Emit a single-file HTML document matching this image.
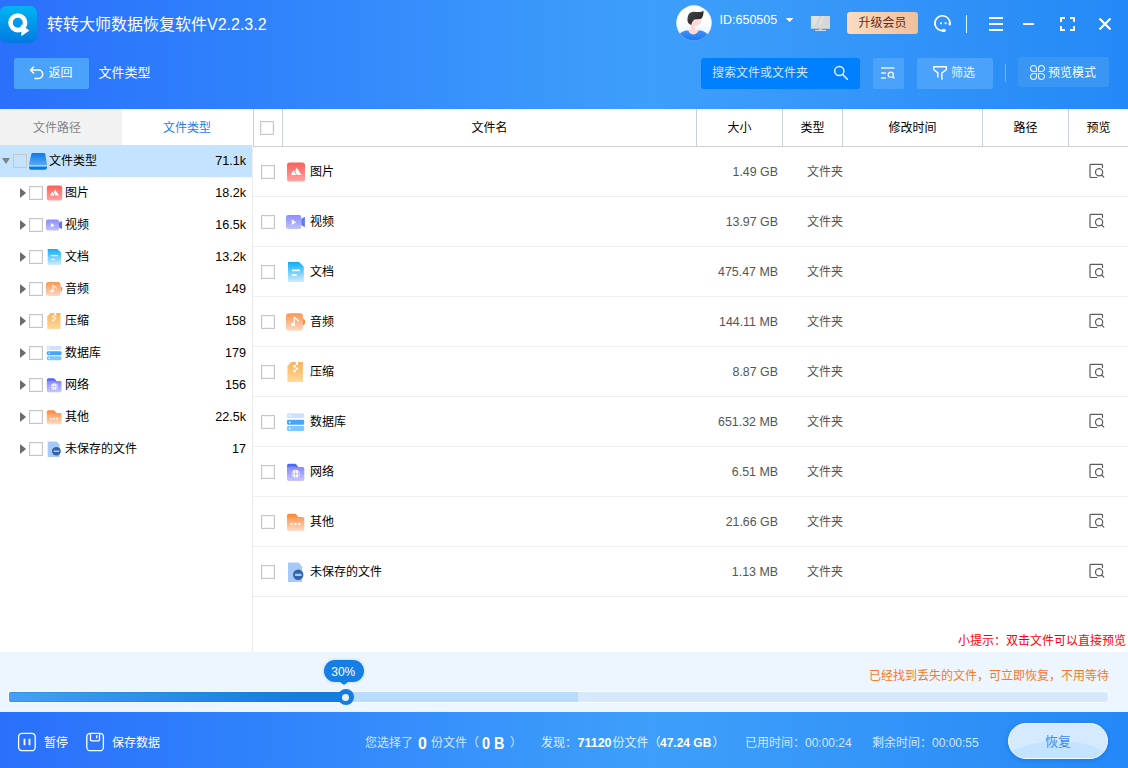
<!DOCTYPE html>
<html lang="zh-CN">
<head>
<meta charset="utf-8">
<title>转转大师数据恢复软件</title>
<style>
*{box-sizing:border-box;margin:0;padding:0}
html,body{width:1128px;height:768px;overflow:hidden;background:#fff}
body{font-family:"Liberation Sans","Noto Sans CJK SC",sans-serif;font-size:12px;color:#000;position:relative}
.abs{position:absolute}
#hdr{position:absolute;left:0;top:0;width:1128px;height:109px;background:linear-gradient(90deg,#2a70fb 0%,#3083fb 24%,#3893fb 42%,#3e9ffa 58%,#3294f8 80%,#2489f7 100%)}
.t{position:absolute;white-space:nowrap;line-height:1}
#title{left:47px;top:17px;font-size:16px;color:#fff}
.hbtn{position:absolute;background:#4aa2fb;border-radius:2px;color:#fff}
/* tabs */
#tab1{position:absolute;left:0;top:109px;width:122px;padding-right:8px;height:36px;background:#f2f2f2;color:#858585;text-align:center;line-height:38px}
#tab2{position:absolute;left:122px;top:109px;width:130px;height:36px;background:#fff;color:#1f80ea;text-align:center;line-height:38px}
#lpane{position:absolute;left:0;top:145px;width:252px;height:507px;background:#fff}
#vline{position:absolute;left:252px;top:147px;width:1px;height:505px;background:#ebebeb}
.trow{position:absolute;left:0;width:252px;height:32px}
.trow.sel{background:#c3e3ff}
.trow .nm{position:absolute;top:10px;line-height:12px;font-size:12px;white-space:nowrap}
.trow .ct{position:absolute;right:6px;top:10px;line-height:12px;font-size:12.600px}
.cb{position:absolute;width:14px;height:14px;border:1px solid #c6c6c6;background:#fff;box-shadow:inset 0 0 0 1px #f4f4f4}
.arr{position:absolute;width:0;height:0;border-style:solid}
.arr.r{border-width:5px 0 5px 6px;border-color:transparent transparent transparent #6c6c6c}
.arr.d{border-width:6px 4.600px 0 4.600px;border-color:#808080 transparent transparent transparent}
.ico{position:absolute;width:18px;height:18px}
/* table */
#thead{position:absolute;left:253px;top:109px;width:875px;height:38px;border-bottom:1px solid #cfcfcf;background:#fff}
#thead:before{content:"";position:absolute;left:0;top:0;width:1px;height:37px;background:#cfcfcf}
.th{position:absolute;top:0;height:37px;line-height:39px;text-align:center;font-size:12px;color:#000}
.vsep{position:absolute;top:0;width:1px;height:37px;background:#c9d0da}
.row{position:absolute;left:253px;width:875px;height:50px;border-bottom:1px solid #efefef}
.row .nm{position:absolute;left:57px;top:19px;line-height:12px;white-space:nowrap}
.row .sz{position:absolute;right:350px;top:19px;line-height:12px;color:#555;white-space:nowrap;font-size:12.400px}
.row .ty{position:absolute;left:554px;top:19px;line-height:12px;color:#555}
/* bottom */
#prog{position:absolute;left:0;top:652px;width:1128px;height:60px;background:#edf5fe}
#foot{position:absolute;left:0;top:712px;width:1128px;height:56px;background:linear-gradient(90deg,#2a70fb 0%,#3083fb 24%,#3893fb 42%,#3e9ffa 58%,#3294f8 80%,#2489f7 100%);color:#fff}
</style>
</head>
<body>

<svg width="0" height="0" style="position:absolute">
<defs>
<linearGradient id="gImg" x1="0" y1="0" x2="0" y2="1"><stop offset="0" stop-color="#fc5d57"/><stop offset="1" stop-color="#ffa5a2"/></linearGradient>
<linearGradient id="gVid" x1="0" y1="0" x2="0" y2="1"><stop offset="0" stop-color="#8b8ffb"/><stop offset="1" stop-color="#c0c0fd"/></linearGradient>
<linearGradient id="gDoc" x1="0" y1="0" x2="0" y2="1"><stop offset="0" stop-color="#0aaef8"/><stop offset="1" stop-color="#d2ecfd"/></linearGradient>
<linearGradient id="gAud" x1="0" y1="0" x2="0" y2="1"><stop offset="0" stop-color="#fd9550"/><stop offset="1" stop-color="#fbdac4"/></linearGradient>
<linearGradient id="gZip" x1="0" y1="0" x2="0" y2="1"><stop offset="0" stop-color="#fdb259"/><stop offset="1" stop-color="#fed99e"/></linearGradient>
<linearGradient id="gNet" x1="0" y1="0" x2="0" y2="1"><stop offset="0" stop-color="#8486fb"/><stop offset="1" stop-color="#c8c6fd"/></linearGradient>
<linearGradient id="gOth" x1="0" y1="0" x2="0" y2="1"><stop offset="0" stop-color="#fd9650"/><stop offset="1" stop-color="#fcdcc8"/></linearGradient>
<linearGradient id="gDsk" x1="0" y1="0" x2="0" y2="1"><stop offset="0" stop-color="#0a7be6"/><stop offset="1" stop-color="#5ca9f6"/></linearGradient>
<symbol id="iImg" viewBox="0 0 20 20" preserveAspectRatio="none"><rect x="1" y="0.500" width="18" height="19" rx="2.600" fill="url(#gImg)"/><path d="M4.800 13L7.500 8L10.200 13z" fill="#fff"/><path d="M10.800 5.800L15.300 13H10.700L10.300 10.900 9 9.200z" fill="#fff" stroke="#fd817d" stroke-width=".7" paint-order="stroke"/></symbol>
<symbol id="iVid" viewBox="0 0 20 20" preserveAspectRatio="none"><rect x="0" y="3" width="15.300" height="14" rx="2.200" fill="url(#gVid)"/><path d="M15.300 7L18 5.200a.6.600 0 0 1 .9.500V14.300a.6.600 0 0 1-.9.500L15.300 13z" fill="#6474f9"/><path d="M5.800 7.400V13.100L10.100 10.250z" fill="#fff"/></symbol>
<symbol id="iDoc" viewBox="0 0 20 20" preserveAspectRatio="none"><path d="M2 0h11.200L17.800 4.800V20H2z" fill="url(#gDoc)"/><rect x="6" y="7.400" width="8" height="1.800" rx=".4" fill="#fff"/><rect x="6" y="12.100" width="4.600" height="1.800" rx=".4" fill="#fff"/></symbol>
<symbol id="iAud" viewBox="0 0 20 20" preserveAspectRatio="none"><path d="M17 6.300a4.200 4.200 0 0 1 0 7.400z" fill="#fd8832"/><rect x="0" y="1.300" width="17" height="17.500" rx="3" fill="url(#gAud)"/><ellipse cx="7" cy="12.500" rx="2" ry="1.700" fill="#fff"/><path d="M8.300 12.500V5.300L12.800 9.200" fill="none" stroke="#fff" stroke-width="1.200"/></symbol>
<symbol id="iZip" viewBox="0 0 20 20" preserveAspectRatio="none"><path d="M5.200 0H17V20H1.500V4.200z" fill="url(#gZip)"/><path d="M9.800 0h2.300v3H9.800zM7.200 3h2.600v2.400H7.200zM9.800 5.400h2.300v2.400H9.800zM7.200 7.800h2.600v2.400H7.200z" fill="#fff"/></symbol>
<symbol id="iDb" viewBox="0 0 20 20" preserveAspectRatio="none"><rect x="1" y="1.300" width="17.200" height="4.800" rx="1.400" fill="#cde1fd"/><rect x="1" y="7.800" width="17.200" height="5" rx="1.400" fill="#47a3fb"/><rect x="1" y="14" width="17.200" height="5" rx="1.400" fill="#7bc8fc"/><circle cx="3.800" cy="3.700" r=".9" fill="#fff"/><circle cx="3.800" cy="10.300" r=".9" fill="#fff"/><circle cx="3.800" cy="16.500" r=".9" fill="#fff"/></symbol>
<symbol id="iNet" viewBox="0 0 20 20" preserveAspectRatio="none"><path d="M3 1.700h6a1.500 1.500 0 0 1 1.100.5L12.300 5H1V3.700a2 2 0 0 1 2-2z" fill="#4668f9"/><path d="M1 4.400h8l2.500.6h5a1.800 1.800 0 0 1 1.800 1.800V17.200a1.800 1.800 0 0 1-1.800 1.800H2.800A1.800 1.800 0 0 1 1 17.200z" fill="url(#gNet)"/><circle cx="9.700" cy="11.800" r="4" fill="#fff"/><path d="M5.700 11.800h8M9.700 7.800v8M7.500 8.400c-1 2-1 4.800 0 6.800M11.900 8.400c1 2 1 4.800 0 6.800" stroke="#a9a8fc" stroke-width=".7" fill="none"/></symbol>
<symbol id="iOth" viewBox="0 0 20 20" preserveAspectRatio="none"><path d="M3 1.700h6a1.500 1.500 0 0 1 1.100.5L12.300 5H1V3.700a2 2 0 0 1 2-2z" fill="#fd8b3c"/><path d="M1 4.400h8l2.500.6h5a1.800 1.800 0 0 1 1.800 1.800V17.200a1.800 1.800 0 0 1-1.800 1.800H2.800A1.800 1.800 0 0 1 1 17.200z" fill="url(#gOth)"/><rect x="4.600" y="11" width="2.100" height="2.100" rx=".5" fill="#fff"/><rect x="8.400" y="11" width="2.100" height="2.100" rx=".5" fill="#fff"/><rect x="12.200" y="11" width="2.100" height="2.100" rx=".5" fill="#fff"/></symbol>
<symbol id="iUns" viewBox="0 0 20 20" preserveAspectRatio="none"><path d="M2 .5h10.500L16.100 4.400V20H2z" fill="#a7c9f8"/><circle cx="12.200" cy="12.800" r="5.200" fill="#3363a9"/><rect x="9" y="11.800" width="6.600" height="2.100" rx=".3" fill="#a7c9f8"/></symbol>
<symbol id="iDsk" viewBox="0 0 20 18"><path d="M4.800 0H15.800a1.500 1.500 0 0 1 1.450 1.100L19 11.200a.8.800 0 0 1-.8 1H1.800a.8.800 0 0 1-.8-1L3.350 1.100A1.500 1.500 0 0 1 4.800 0z" fill="url(#gDsk)"/><path d="M1 13.600H19V14.500a2.200 2.200 0 0 1-2.200 2.200H3.200A2.200 2.200 0 0 1 1 14.500z" fill="#097be6"/></symbol>
<symbol id="iPrev" viewBox="0 0 18 18"><path d="M14.500 5.500V3.200a.8.800 0 0 0-.8-.8H2.800a.8.800 0 0 0-.8.800V14.700a.8.800 0 0 0 .8.800H8.800" fill="none" stroke="#5c5c5c" stroke-width="1.200" stroke-linecap="round"/><circle cx="11.100" cy="10.300" r="3.600" fill="none" stroke="#5c5c5c" stroke-width="1.200"/><path d="M13.700 13L15.800 15.200" stroke="#5c5c5c" stroke-width="1.200" stroke-linecap="round"/></symbol>
</defs>
</svg>
<div id="hdr"></div>
<div class="t" id="title">转转大师数据恢复软件V2.2.3.2</div>

<!-- logo -->
<svg class="abs" style="left:0;top:6px" width="38" height="38" viewBox="0 0 38 38">
  <defs><linearGradient id="lg" x1="0" y1="0" x2="0" y2="1"><stop offset="0" stop-color="#00b5f2"/><stop offset="1" stop-color="#0279e0"/></linearGradient></defs>
  <rect x="-0.300" y="0" width="37.300" height="37" rx="7" fill="url(#lg)"/>
  <circle cx="17.8" cy="16.8" r="7.3" fill="none" stroke="#fff" stroke-width="4.6"/>
  <path d="M21 18.6L29.4 24.4L21.4 30.2z" fill="#fff"/>
</svg>
<!-- avatar -->
<svg class="abs" style="left:675.500px;top:4.500px" width="36" height="36" viewBox="-0.500 -0.500 36 36">
  <defs><clipPath id="avc"><circle cx="17.500" cy="17.500" r="17.700"/></clipPath>
  <linearGradient id="avg" x1="0" y1="0" x2="0" y2="1"><stop offset="0" stop-color="#fff"/><stop offset=".45" stop-color="#fff"/><stop offset=".8" stop-color="#e9f3fe"/><stop offset="1" stop-color="#dcebfd"/></linearGradient>
  <linearGradient id="avb" x1="0" y1="0" x2="0" y2="1"><stop offset="0" stop-color="#3c90fa"/><stop offset="1" stop-color="#1b76f2"/></linearGradient>
  <linearGradient id="avh" x1="0" y1="0" x2="1" y2="1"><stop offset="0" stop-color="#4a4a4c"/><stop offset="1" stop-color="#1c1c1e"/></linearGradient></defs>
  <circle cx="17.500" cy="17.500" r="17.700" fill="url(#avg)"/>
  <g clip-path="url(#avc)">
    <path d="M-1 31C3 28 7 25 10 24.900H24.500C27.500 25.500 31 28.500 36 32V36H-1z" fill="url(#avb)"/>
    <path d="M14.300 17h3.900v7.300h3.800c0 2.600-2.200 4.600-5.100 4.600s-5.100-2-5.100-4.600h2.500z" fill="#ffd7d3"/>
    <path d="M14.500 13.500L25 12.500C25 15 24.500 17.300 22.800 18.800 21.500 20.200 20 20.800 18.200 20.600L14.300 20z" fill="#ffd9d5"/>
    <path d="M11 15.500C10.800 10 12.500 6.500 17 6.300 20 6.200 24.500 7.500 26.900 5 27.300 8 26.800 11 25 12.900 22.500 13.800 20 13.400 17.900 14 16 15.500 15.200 17.500 14.700 19.600 12.800 18.700 11.300 17.300 11 15.500z" fill="url(#avh)"/>
  </g>
</svg>
<div class="t" style="left:719.500px;top:14px;font-size:12.500px;color:#fff">ID:650505</div>
<svg class="abs" style="left:785px;top:17px" width="10" height="6" viewBox="0 0 10 6"><path d="M0.800 0.900H8.400L4.600 4.900z" fill="#fff"/></svg>
<!-- monitor -->
<svg class="abs" style="left:810px;top:15px" width="22" height="17" viewBox="0 0 22 17">
  <rect x="0.900" y="1" width="19.100" height="12.500" fill="#d6d6d6"/>
  <path d="M9 1L4.600 11H1.600V1zM14.500 1L10 11H8L12.500 1z" fill="#e1e1e1"/>
  <rect x="0.900" y="11.300" width="19.100" height="2.200" fill="#dddad6"/>
  <rect x="9.300" y="13.500" width="2.600" height="1.600" fill="#cfd3d8"/>
  <rect x="5.100" y="14.900" width="10.800" height="1.100" fill="#ddd6cf"/>
</svg>
<!-- vip -->
<div class="abs" style="left:847px;top:12px;width:71px;height:22px;border-radius:3px;background:linear-gradient(90deg,#fadcc1,#f0c09d);color:#652a16;font-size:12px;line-height:23px;text-align:center">升级会员</div>
<!-- service -->
<svg class="abs" style="left:932px;top:13px" width="21" height="21" viewBox="0 0 21 21" fill="none" stroke="#fff" stroke-width="1.600" stroke-linecap="round">
  <path d="M17.900 9.600A7.500 7.500 0 1 0 11 17.700"/>
  <rect x="16.600" y="8.900" width="2.300" height="3.500" rx=".8" fill="#fff" stroke="none"/>
  <rect x="2" y="8.600" width="1.800" height="4" rx=".8" fill="#fff" stroke="none"/>
  <rect x="9.600" y="16.100" width="4.100" height="2.800" rx=".8" fill="#fff" stroke="none"/>
  <rect x="8.100" y="9.300" width="1.900" height="1.900" rx=".4" fill="#fff" stroke="none"/>
  <rect x="12.600" y="9.300" width="1.900" height="1.900" rx=".4" fill="#fff" stroke="none"/>
</svg>
<div class="abs" style="left:966px;top:15px;width:1px;height:18px;background:#dfeeff"></div>
<!-- menu -->
<div class="abs" style="left:989px;top:17px;width:14px;height:2px;background:#fff"></div>
<div class="abs" style="left:989px;top:23px;width:14px;height:2px;background:#fff"></div>
<div class="abs" style="left:989px;top:29px;width:14px;height:2px;background:#fff"></div>
<div class="abs" style="left:1023px;top:23px;width:11px;height:2px;background:#fff"></div>
<svg class="abs" style="left:1059px;top:16px" width="17" height="16" viewBox="0 0 17 16" fill="none" stroke="#fff" stroke-width="2">
  <path d="M2 6V2H6M11 2h4v4M15 10v4h-4M6 14H2V10"/>
</svg>
<svg class="abs" style="left:1098px;top:17px" width="14" height="14" viewBox="0 0 14 14" fill="none" stroke="#fff" stroke-width="2.200">
  <path d="M1.500 1.500L12.500 12.500M12.500 1.500L1.500 12.500"/>
</svg>

<!-- row 2 -->
<div class="hbtn" style="left:13.500px;top:57.500px;width:75px;height:31px"></div>
<svg class="abs" style="left:29px;top:65px" width="16" height="16" viewBox="0 0 16 16" fill="none" stroke="#fff" stroke-width="1.500" stroke-linecap="round" stroke-linejoin="round">
  <path d="M4.500 2L1.500 5l3 3"/><path d="M2 5h7.500a4.200 4.200 0 0 1 0 8.400H6"/>
</svg>
<div class="t" style="left:48.500px;top:67px;font-size:12px;color:#fff">返回</div>
<div class="t" style="left:98.500px;top:66px;font-size:13px;color:#fff">文件类型</div>

<div class="abs" style="left:700.500px;top:57.500px;width:159.500px;height:31px;border-radius:3px;background:#0080ff"></div>
<div class="t" style="left:712px;top:67px;font-size:12px;color:#d5e6ff">搜索文件或文件夹</div>
<svg class="abs" style="left:832px;top:64px" width="18" height="18" viewBox="0 0 18 18" fill="none" stroke="#e6f0ff" stroke-width="1.500" stroke-linecap="round">
  <circle cx="7.300" cy="7" r="4.600"/><path d="M10.700 10.400L15.300 15.300"/>
</svg>
<div class="hbtn" style="left:872.500px;top:57.500px;width:31px;height:31px"></div>
<svg class="abs" style="left:878px;top:64px" width="20" height="18" viewBox="0 0 20 18" fill="none" stroke="#e6f0ff" stroke-width="1.400">
  <path d="M3 4h13.500M3 9h5M3 14h5"/><circle cx="12.800" cy="10.800" r="2.600"/><path d="M14.700 12.800L16.500 14.600"/>
</svg>
<div class="hbtn" style="left:916.500px;top:57.500px;width:76px;height:31px"></div>
<svg class="abs" style="left:928px;top:60px" width="24" height="24" viewBox="0 0 24 24" fill="none" stroke="#fff" stroke-width="1.400" stroke-linejoin="round" stroke-linecap="butt">
  <path d="M9.900 17.400V12.900L5.700 9.700V6.800H18.400V9.700L13.900 12.900V19.700"/>
</svg>
<div class="t" style="left:951px;top:67px;font-size:12px;color:#e8f2ff">筛选</div>
<div class="abs" style="left:1005px;top:64px;width:1px;height:18px;background:rgba(255,255,255,.35)"></div>
<div class="hbtn" style="left:1018px;top:57px;width:91px;height:30px;background:#3996f2"></div>
<svg class="abs" style="left:1029px;top:65px" width="17" height="16" viewBox="0 0 17 16" fill="none" stroke="#e8f2ff" stroke-width="1.100">
  <path d="M4.50 0.50H4.50A3 3 0 0 1 7.50 3.50V6.10A0.4 0.4 0 0 1 7.10 6.50H4.50A3 3 0 0 1 1.50 3.50V3.50A3 3 0 0 1 4.50 0.50zM12.50 0.50H12.50A3 3 0 0 1 15.50 3.50V3.50A3 3 0 0 1 12.50 6.50H9.90A0.4 0.4 0 0 1 9.50 6.10V3.50A3 3 0 0 1 12.50 0.50zM4.50 8.50H7.10A0.4 0.4 0 0 1 7.50 8.90V11.50A3 3 0 0 1 4.50 14.50H4.50A3 3 0 0 1 1.50 11.50V11.50A3 3 0 0 1 4.50 8.50zM9.90 8.50H12.50A3 3 0 0 1 15.50 11.50V11.50A3 3 0 0 1 12.50 14.50H12.50A3 3 0 0 1 9.50 11.50V8.90A0.4 0.4 0 0 1 9.90 8.50z"/>
</svg>
<div class="t" style="left:1048px;top:67px;font-size:12px;color:#fff">预览模式</div>

<div id="tab1">文件路径</div>
<div id="tab2">文件类型</div>
<div id="lpane"></div>
<div id="vline"></div>
<div class="trow sel" style="top:145px"><div class="arr d" style="left:2px;top:13px"></div><div class="cb" style="left:13px;top:9px;background:transparent;box-shadow:none"></div><svg class="abs" style="left:28px;top:7.500px" width="20" height="18"><use href="#iDsk"/></svg><div class="nm" style="left:49px">文件类型</div><div class="ct">71.1k</div></div>
<div class="trow" style="top:177px"><div class="arr r" style="left:19.500px;top:11px"></div><div class="cb" style="left:29px;top:9px"></div><svg class="abs" style="left:46px;top:8px" width="17" height="16"><use href="#iImg"/></svg><div class="nm" style="left:65px">图片</div><div class="ct">18.2k</div></div>
<div class="trow" style="top:209px"><div class="arr r" style="left:19.500px;top:11px"></div><div class="cb" style="left:29px;top:9px"></div><svg class="abs" style="left:46px;top:8px" width="17" height="16"><use href="#iVid"/></svg><div class="nm" style="left:65px">视频</div><div class="ct">16.5k</div></div>
<div class="trow" style="top:241px"><div class="arr r" style="left:19.500px;top:11px"></div><div class="cb" style="left:29px;top:9px"></div><svg class="abs" style="left:46px;top:8px" width="17" height="16"><use href="#iDoc"/></svg><div class="nm" style="left:65px">文档</div><div class="ct">13.2k</div></div>
<div class="trow" style="top:273px"><div class="arr r" style="left:19.500px;top:11px"></div><div class="cb" style="left:29px;top:9px"></div><svg class="abs" style="left:46px;top:8px" width="17" height="16"><use href="#iAud"/></svg><div class="nm" style="left:65px">音频</div><div class="ct">149</div></div>
<div class="trow" style="top:305px"><div class="arr r" style="left:19.500px;top:11px"></div><div class="cb" style="left:29px;top:9px"></div><svg class="abs" style="left:46px;top:8px" width="17" height="16"><use href="#iZip"/></svg><div class="nm" style="left:65px">压缩</div><div class="ct">158</div></div>
<div class="trow" style="top:337px"><div class="arr r" style="left:19.500px;top:11px"></div><div class="cb" style="left:29px;top:9px"></div><svg class="abs" style="left:46px;top:8px" width="17" height="16"><use href="#iDb"/></svg><div class="nm" style="left:65px">数据库</div><div class="ct">179</div></div>
<div class="trow" style="top:369px"><div class="arr r" style="left:19.500px;top:11px"></div><div class="cb" style="left:29px;top:9px"></div><svg class="abs" style="left:46px;top:8px" width="17" height="16"><use href="#iNet"/></svg><div class="nm" style="left:65px">网络</div><div class="ct">156</div></div>
<div class="trow" style="top:401px"><div class="arr r" style="left:19.500px;top:11px"></div><div class="cb" style="left:29px;top:9px"></div><svg class="abs" style="left:46px;top:8px" width="17" height="16"><use href="#iOth"/></svg><div class="nm" style="left:65px">其他</div><div class="ct">22.5k</div></div>
<div class="trow" style="top:433px"><div class="arr r" style="left:19.500px;top:11px"></div><div class="cb" style="left:29px;top:9px"></div><svg class="abs" style="left:46px;top:8px" width="17" height="16"><use href="#iUns"/></svg><div class="nm" style="left:65px">未保存的文件</div><div class="ct">17</div></div>

<div id="thead">
<div class="cb" style="left:7px;top:12px"></div>
<div class="vsep" style="left:29px"></div><div class="vsep" style="left:443px"></div><div class="vsep" style="left:529px"></div><div class="vsep" style="left:589px"></div><div class="vsep" style="left:729px"></div><div class="vsep" style="left:815px"></div>
<div class="th" style="left:30px;width:413px">文件名</div>
<div class="th" style="left:444px;width:85px">大小</div>
<div class="th" style="left:530px;width:59px">类型</div>
<div class="th" style="left:590px;width:139px">修改时间</div>
<div class="th" style="left:730px;width:85px">路径</div>
<div class="th" style="left:816px;width:59px">预览</div>
</div>
<div class="row" style="top:147px"><div class="cb" style="left:8px;top:18px"></div><svg class="abs" style="left:33px;top:15px" width="20" height="20"><use href="#iImg"/></svg><div class="nm">图片</div><div class="sz">1.49 GB</div><div class="ty">文件夹</div><svg class="abs" style="left:835px;top:15px" width="18" height="18"><use href="#iPrev"/></svg></div>
<div class="row" style="top:197px"><div class="cb" style="left:8px;top:18px"></div><svg class="abs" style="left:33px;top:15px" width="20" height="20"><use href="#iVid"/></svg><div class="nm">视频</div><div class="sz">13.97 GB</div><div class="ty">文件夹</div><svg class="abs" style="left:835px;top:15px" width="18" height="18"><use href="#iPrev"/></svg></div>
<div class="row" style="top:247px"><div class="cb" style="left:8px;top:18px"></div><svg class="abs" style="left:33px;top:15px" width="20" height="20"><use href="#iDoc"/></svg><div class="nm">文档</div><div class="sz">475.47 MB</div><div class="ty">文件夹</div><svg class="abs" style="left:835px;top:15px" width="18" height="18"><use href="#iPrev"/></svg></div>
<div class="row" style="top:297px"><div class="cb" style="left:8px;top:18px"></div><svg class="abs" style="left:33px;top:15px" width="20" height="20"><use href="#iAud"/></svg><div class="nm">音频</div><div class="sz">144.11 MB</div><div class="ty">文件夹</div><svg class="abs" style="left:835px;top:15px" width="18" height="18"><use href="#iPrev"/></svg></div>
<div class="row" style="top:347px"><div class="cb" style="left:8px;top:18px"></div><svg class="abs" style="left:33px;top:15px" width="20" height="20"><use href="#iZip"/></svg><div class="nm">压缩</div><div class="sz">8.87 GB</div><div class="ty">文件夹</div><svg class="abs" style="left:835px;top:15px" width="18" height="18"><use href="#iPrev"/></svg></div>
<div class="row" style="top:397px"><div class="cb" style="left:8px;top:18px"></div><svg class="abs" style="left:33px;top:15px" width="20" height="20"><use href="#iDb"/></svg><div class="nm">数据库</div><div class="sz">651.32 MB</div><div class="ty">文件夹</div><svg class="abs" style="left:835px;top:15px" width="18" height="18"><use href="#iPrev"/></svg></div>
<div class="row" style="top:447px"><div class="cb" style="left:8px;top:18px"></div><svg class="abs" style="left:33px;top:15px" width="20" height="20"><use href="#iNet"/></svg><div class="nm">网络</div><div class="sz">6.51 MB</div><div class="ty">文件夹</div><svg class="abs" style="left:835px;top:15px" width="18" height="18"><use href="#iPrev"/></svg></div>
<div class="row" style="top:497px"><div class="cb" style="left:8px;top:18px"></div><svg class="abs" style="left:33px;top:15px" width="20" height="20"><use href="#iOth"/></svg><div class="nm">其他</div><div class="sz">21.66 GB</div><div class="ty">文件夹</div><svg class="abs" style="left:835px;top:15px" width="18" height="18"><use href="#iPrev"/></svg></div>
<div class="row" style="top:547px"><div class="cb" style="left:8px;top:18px"></div><svg class="abs" style="left:33px;top:15px" width="20" height="20"><use href="#iUns"/></svg><div class="nm">未保存的文件</div><div class="sz">1.13 MB</div><div class="ty">文件夹</div><svg class="abs" style="left:835px;top:15px" width="18" height="18"><use href="#iPrev"/></svg></div>

<div class="t" style="right:2px;top:634.500px;font-size:12px;color:#ff0000">小提示：双击文件可以直接预览</div>
<div id="prog">
<div class="t" style="right:19px;top:17.500px;font-size:12px;color:#f57b28">已经找到丢失的文件，可立即恢复，不用等待</div>
<div class="abs" style="left:9px;top:40px;width:1099px;height:10px;border-radius:2px;background:#d6e9fc;box-shadow:0 0 0 1px #f9fcff"></div>
<div class="abs" style="left:9px;top:40px;width:569px;height:10px;border-radius:2px 0 0 2px;background:#badcfc"></div>
<div class="abs" style="left:9px;top:40px;width:337px;height:10px;border-radius:2px 0 0 2px;background:linear-gradient(90deg,#459ff6,#147ce3 85%);box-shadow:inset 0 1px 0 rgba(20,110,220,.25),inset 0 -1px 0 rgba(20,110,220,.25)"></div>
<div class="abs" style="left:337.500px;top:36.800px;width:16.400px;height:16.400px;border-radius:8.200px;background:#147ce3"></div>
<div class="abs" style="left:342.200px;top:41.500px;width:7px;height:7px;border-radius:4px;background:#e8f2fc"></div>
<div class="abs" style="left:324px;top:8px;width:40px;height:22px;border-radius:11px;background:#167fe5;color:#fff;font-size:12px;line-height:24px;padding-right:1.500px;text-align:center;box-shadow:0 0 3px rgba(22,127,229,.35)">30%</div>
<div class="arr" style="left:340px;top:29.500px;border-width:3.500px 4px 0 4px;border-color:#167fe5 transparent transparent transparent"></div>
</div>
<div id="foot">
<svg class="abs" style="left:17px;top:20px" width="20" height="20" viewBox="0 0 20 20" fill="none" stroke="#fff" stroke-width="1.300"><rect x="1.600" y="1.300" width="16.600" height="17.400" rx="3.500"/><path d="M7.500 6.700v6.600M12.500 6.700v6.600" stroke-width="1.800"/></svg>
<div class="t" style="left:44px;top:25px;font-size:12px;color:#fff">暂停</div>
<svg class="abs" style="left:85px;top:20px" width="20" height="20" viewBox="0 0 20 20" fill="none" stroke="#fff" stroke-width="1.300"><rect x="1.800" y="1.300" width="16.600" height="17.400" rx="3.500"/><path d="M5.500 1.500v6.300a1 1 0 0 0 1 1h7a1 1 0 0 0 1-1V1.500M11.700 3.200v3"/></svg>
<div class="t" style="left:112px;top:25px;font-size:12px;color:#fff">保存数据</div>
<div class="t" style="left:365px;top:25px;font-size:12px;color:#d4e6ff">您选择了</div>
<div class="t" style="left:418px;top:23.500px;font-size:16px;font-weight:bold;color:#fff">0</div>
<div class="t" style="left:431px;top:25px;font-size:12px;color:#d4e6ff">份文件（</div>
<div class="t" style="left:482px;top:23.500px;font-size:16px;font-weight:bold;transform:scaleX(.9);transform-origin:0 0;color:#fff">0 B</div>
<div class="t" style="left:510px;top:25px;font-size:12px;color:#d4e6ff">）</div>
<div class="t" style="left:541px;top:25px;font-size:12px;color:#e4efff">发现：</div>
<div class="t" style="left:577.500px;top:25px;font-size:12.500px;font-weight:bold;color:#fff">71120</div>
<div class="t" style="left:612.500px;top:25px;font-size:12px;color:#e4efff">份文件（</div>
<div class="t" style="left:660px;top:25px;font-size:12px;font-weight:bold;color:#fff">47.24 GB</div>
<div class="t" style="left:712.500px;top:25px;font-size:12px;color:#e4efff">）</div>
<div class="t" style="left:745px;top:25px;font-size:12px;color:#d4e6ff">已用时间：00:00:24</div>
<div class="t" style="left:872px;top:25px;font-size:12px;color:#d4e6ff">剩余时间：00:00:55</div>
<div class="abs" style="left:1008px;top:11px;width:100px;height:36px;border-radius:18px;background:#d6eafe;border:1px solid #f4faff;box-shadow:0 1px 4px rgba(20,80,190,.4);overflow:hidden"><div class="abs" style="left:-12px;top:17px;width:122px;height:60px;border-radius:50%;background:#c3e3ff"></div><div class="abs" style="left:0;top:0;width:98px;height:34px;color:#3d8df3;font-size:13px;line-height:36px;text-align:center">恢复</div></div>
</div>
</body>
</html>
